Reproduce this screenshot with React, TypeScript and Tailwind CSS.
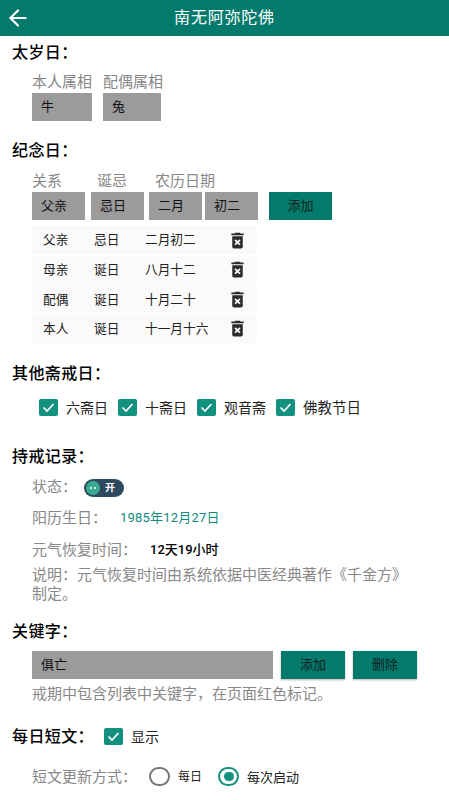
import { ArrowLeft } from 'lucide-react';
import { MdDeleteForever } from 'react-icons/md';

const rows = [
  ['父亲', '忌日', '二月初二'],
  ['母亲', '诞日', '八月十二'],
  ['配偶', '诞日', '十月二十'],
  ['本人', '诞日', '十一月十六'],
];

function Heading({ children, className = '' }: { children: React.ReactNode; className?: string }) {
  return (
    <h2 className={`h-[22px] pl-3 text-[16px] leading-[22px] font-medium tracking-[0.4px] text-black ${className}`}>
      {children}
    </h2>
  );
}

function Select({ text, className = '' }: { text: string; className?: string }) {
  return (
    <div className={`h-7 bg-[#9b9b9b] pl-[9px] text-[13px] leading-7 text-[#111] ${className}`}>{text}</div>
  );
}

function Checkbox({ className = '' }: { className?: string }) {
  return (
    <span className={`flex h-[17px] w-[19px] shrink-0 items-center justify-center rounded-[2px] bg-[#12917f] ${className}`}>
      <svg width="13" height="11" viewBox="0 0 13 11" fill="none">
        <path d="M1.5 5.5 L5 9 L11.5 2" stroke="white" strokeWidth="1.7" />
      </svg>
    </span>
  );
}

function TealButton({ text, className = '' }: { text: string; className?: string }) {
  return (
    <button className={`h-7 bg-[#047a6c] pb-px text-center text-[13px] text-[#10211e] shadow-[0_1px_2px_rgba(0,0,0,0.3)] ${className}`}>
      {text}
    </button>
  );
}

export default function App() {
  return (
    <div className="h-[800px] w-[449px] overflow-hidden bg-white font-['Roboto','Noto_Sans_CJK_SC',sans-serif]">
      <header className="flex h-9 items-center bg-[#047a6c] pl-[5px]">
        <ArrowLeft size={26} strokeWidth={2} className="text-white" />
        <h1 className="ml-[-31px] flex-1 text-center text-[16px] tracking-[0.8px] text-white">南无阿弥陀佛</h1>
      </header>

      <Heading className="mt-[6px]">太岁日：</Heading>
      <div className="mt-2 flex h-5 pl-8 text-[15px] leading-5 text-[#888]">
        <span className="w-[71px]">本人属相</span>
        <span>配偶属相</span>
      </div>
      <div className="mt-px flex pl-8">
        <Select text="牛" className="w-[60px]" />
        <Select text="兔" className="ml-[11px] w-[58px]" />
      </div>

      <Heading className="mt-[19px]">纪念日：</Heading>
      <div className="mt-[9px] flex h-5 pl-8 text-[15px] leading-[21px] text-[#888]">
        <span className="w-[65px]">关系</span>
        <span className="w-[58px]">诞忌</span>
        <span>农历日期</span>
      </div>
      <div className="mt-px flex pl-8">
        <Select text="父亲" className="w-[53px]" />
        <Select text="忌日" className="ml-[6px] w-[53px]" />
        <Select text="二月" className="ml-[5px] w-[53px]" />
        <Select text="初二" className="ml-[3px] w-[53px]" />
        <TealButton text="添加" className="ml-[11px] w-[63px] shadow-none" />
      </div>
      <div className="mt-[6px] ml-8 flex w-[225px] flex-col gap-[1.67px]">
        {rows.map((row) => (
          <div key={row[0]} className="flex h-7 items-center bg-[#fafafa] text-[12.7px] text-[#222]">
            <span className="w-[51px] pl-[11px]">{row[0]}</span>
            <span className="w-[51px] pl-[11px]">{row[1]}</span>
            <span className="w-[83px] pl-[11px] whitespace-nowrap">{row[2]}</span>
            <MdDeleteForever size={21} className="ml-[10px] text-[#2b2b2b]" />
          </div>
        ))}
      </div>

      <Heading className="mt-5">其他斋戒日：</Heading>
      <div className="mt-3 flex h-[22px] items-center pl-[39px] text-[14px] text-[#222]">
        <Checkbox />
        <span className="ml-2 w-[52px] pt-px">六斋日</span>
        <Checkbox />
        <span className="ml-2 w-[52px] pt-px">十斋日</span>
        <Checkbox />
        <span className="ml-2 w-[52px] pt-px">观音斋</span>
        <Checkbox />
        <span className="ml-2 pt-px text-[14.5px]">佛教节日</span>
      </div>

      <Heading className="mt-[27px]">持戒记录：</Heading>
      <div className="mt-[9px] flex h-5 items-center pl-8 text-[15px] text-[#888]">
        <span className="w-[52px]">状态：</span>
        <span className="flex h-[18px] w-10 translate-y-px items-center rounded-full bg-[#2c4a5e] pl-[2px]">
          <span className="flex h-[14px] w-[14px] items-center justify-center gap-[2px] rounded-full bg-[#3aa98f]">
            <span className="h-[2px] w-[2px] rounded-full bg-white" />
            <span className="h-[2px] w-[2px] rounded-full bg-white" />
          </span>
          <span className="ml-[5px] text-[10px] leading-none font-bold text-white">开</span>
        </span>
      </div>
      <div className="mt-[11px] flex h-5 items-center pl-8 text-[15px] text-[#888]">
        <span className="w-[88px]">阳历生日：</span>
        <span className="text-[13px] tracking-[0.2px] text-[#0f8a7c]">1985年12月27日</span>
      </div>
      <div className="mt-3 flex h-5 items-center pl-8 text-[15px] text-[#888]">
        <span className="w-[118px]">元气恢复时间：</span>
        <span className="text-[13px] font-medium text-black">12天19小时</span>
      </div>
      <p className="mt-[6px] w-[420px] pl-8 text-[15px] leading-[19px] text-[#888]">
        说明：元气恢复时间由系统依据中医经典著作《千金方》制定。
      </p>

      <Heading className="mt-[17px]">关键字：</Heading>
      <div className="mt-2 flex pl-8">
        <Select text="俱亡" className="w-[241px]" />
        <TealButton text="添加" className="ml-2 w-16" />
        <TealButton text="删除" className="ml-2 w-16" />
      </div>
      <p className="mt-[5px] h-5 pl-8 text-[15px] leading-5 text-[#888]">戒期中包含列表中关键字，在页面红色标记。</p>

      <div className="mt-[22px] flex h-[22px] items-center">
        <Heading className="w-[104px] whitespace-nowrap">每日短文：</Heading>
        <Checkbox />
        <span className="ml-2 pt-px text-[14px] text-[#222]">显示</span>
      </div>

      <div className="mt-[19px] flex h-5 items-center pl-8 text-[15px] text-[#888]">
        <span className="w-[117px] pt-px">短文更新方式：</span>
        <span className="h-[19px] w-[21px] rounded-full border-2 border-[#777]" />
        <span className="ml-2 w-[40px] pt-px text-[12px] text-[#222]">每日</span>
        <span className="flex h-[19px] w-[21px] items-center justify-center rounded-full border-2 border-[#12917f]">
          <span className="h-[9px] w-[10px] rounded-full bg-[#12917f]" />
        </span>
        <span className="ml-2 pt-px text-[13px] text-[#222]">每次启动</span>
      </div>
    </div>
  );
}
